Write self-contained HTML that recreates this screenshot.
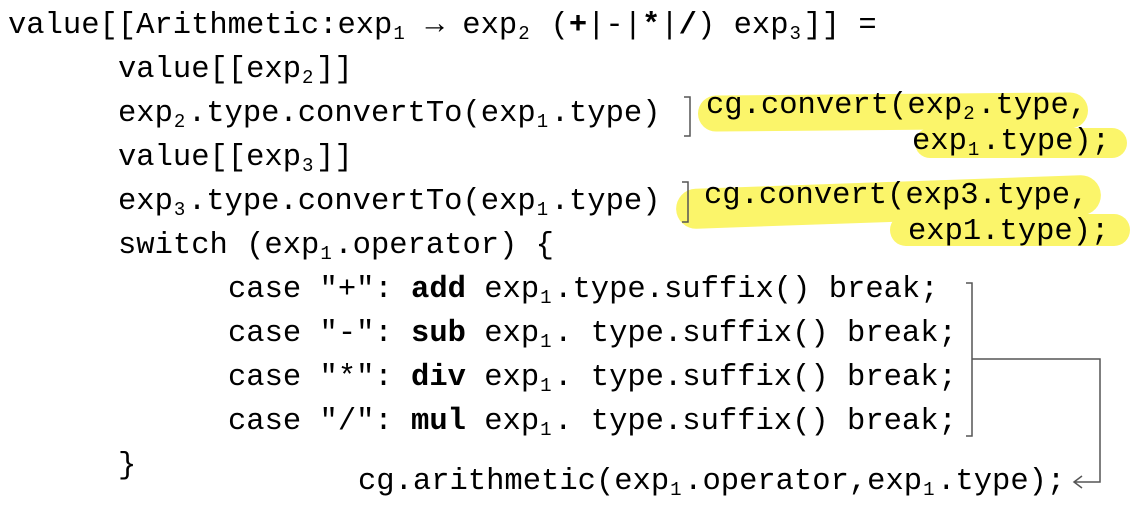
<!DOCTYPE html>
<html><head><meta charset="utf-8"><style>
body{margin:0;width:1140px;height:527px;background:#fff;position:relative;overflow:hidden;font-family:"Liberation Mono",monospace;font-size:30.5px;color:#000}
.l{position:absolute;white-space:pre;line-height:40px;height:40px}
sub{font-size:19px;vertical-align:-6px;line-height:0;display:inline-block;width:14px;padding-left:1px}
.hl{position:absolute;background:#fbf56a;border-radius:20px}
b{font-weight:bold}
</style></head><body>
<div class="hl" style="left:698px;top:94px;width:390px;height:36px;transform:rotate(-0.5deg)"></div>
<div class="hl" style="left:915px;top:128px;width:212px;height:30px"></div>
<div class="hl" style="left:676px;top:182px;width:425px;height:40px;transform:rotate(-2deg)"></div>
<div class="hl" style="left:890px;top:214px;width:240px;height:32px"></div>
<div class="l" style="left:8px;top:6px">value[[Arithmetic:exp<sub>1</sub> → exp<sub>2</sub> (<b>+</b>|-|<b>*</b>|<b>/</b>) exp<sub>3</sub>]] =</div>
<div class="l" style="left:118px;top:50px">value[[exp<sub>2</sub>]]</div>
<div class="l" style="left:118px;top:94px">exp<sub>2</sub>.type.convertTo(exp<sub>1</sub>.type)</div>
<div class="l" style="left:118px;top:138px">value[[exp<sub>3</sub>]]</div>
<div class="l" style="left:118px;top:182px">exp<sub>3</sub>.type.convertTo(exp<sub>1</sub>.type)</div>
<div class="l" style="left:118px;top:226px">switch (exp<sub>1</sub>.operator) {</div>
<div class="l" style="left:228px;top:270px">case "+": <b>add</b> exp<sub>1</sub>.type.suffix() break;</div>
<div class="l" style="left:228px;top:314px">case "-": <b>sub</b> exp<sub>1</sub>. type.suffix() break;</div>
<div class="l" style="left:228px;top:358px">case "*": <b>div</b> exp<sub>1</sub>. type.suffix() break;</div>
<div class="l" style="left:228px;top:402px">case "/": <b>mul</b> exp<sub>1</sub>. type.suffix() break;</div>
<div class="l" style="left:118px;top:446px">}</div>
<div class="l" style="left:358px;top:462px">cg.arithmetic(exp<sub>1</sub>.operator,exp<sub>1</sub>.type);</div>
<div class="l" style="left:706px;top:86px">cg.convert(exp<sub>2</sub>.type,</div>
<div class="l" style="left:912px;top:122px">exp<sub>1</sub>.type);</div>
<div class="l" style="left:704px;top:176px">cg.convert(exp3.type,</div>
<div class="l" style="left:908px;top:212px">exp1.type);</div>
<svg width="1140" height="527" style="position:absolute;left:0;top:0" fill="none" stroke="#555" stroke-width="1.5">
<path d="M684 97H690V136H684"/>
<path d="M682 182H688V222H682"/>
<path d="M966 283H972V436H966"/>
<path d="M972 359H1100V482H1074M1082 476L1074 482L1082 488"/>
</svg>
</body></html>
